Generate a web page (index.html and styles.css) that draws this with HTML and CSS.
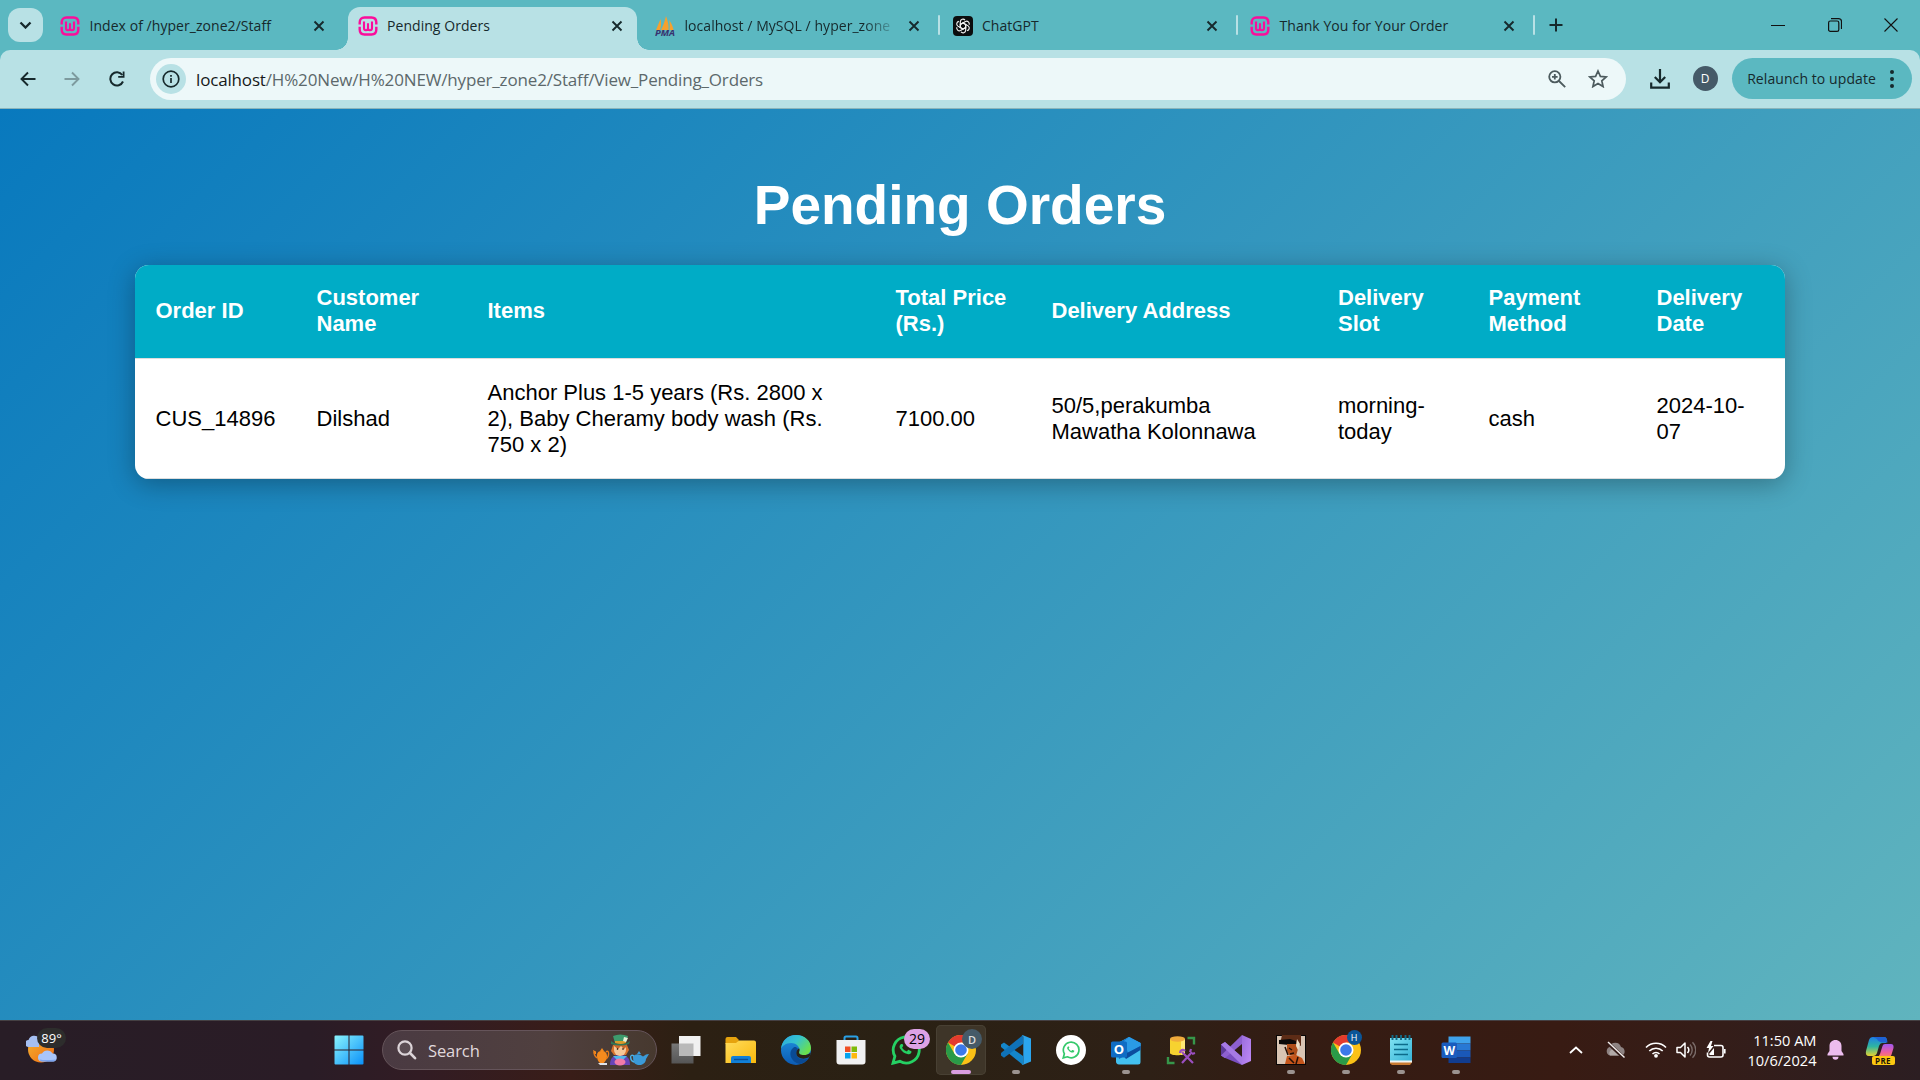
FILE: index.html
```html
<!DOCTYPE html>
<html lang="en">
<head>
<meta charset="utf-8">
<title>Pending Orders</title>
<link rel="stylesheet" href="styles.css">
</head>
<body>
<svg class="defs" aria-hidden="true">
  <defs>
    <linearGradient id="gWin" x1="0" y1="0" x2="1" y2="1"><stop offset="0" stop-color="#8af4fd"/><stop offset="1" stop-color="#0a90f8"/></linearGradient>
    <linearGradient id="gSun" x1="0" y1="0" x2="1" y2="1"><stop offset="0" stop-color="#f3b431"/><stop offset="1" stop-color="#f06a12"/></linearGradient>
    <linearGradient id="gFold" x1="0" y1="0" x2="1" y2="1"><stop offset="0" stop-color="#ffdc5c"/><stop offset="1" stop-color="#f9b90c"/></linearGradient>
    <linearGradient id="gEdgeTop" x1="0" y1="0" x2="1" y2=".6"><stop offset="0" stop-color="#2aa5e0"/><stop offset=".5" stop-color="#35c3d0"/><stop offset="1" stop-color="#6be04c"/></linearGradient>
    <linearGradient id="gEdge" x1="0" y1="0" x2="0" y2="1"><stop offset="0" stop-color="#2092de"/><stop offset="1" stop-color="#0c5bb4"/></linearGradient>
    <linearGradient id="gView" x1="0" y1="0" x2="0" y2="1"><stop offset="0" stop-color="#777"/><stop offset="1" stop-color="#555"/></linearGradient>
    <linearGradient id="gVs" x1="0" y1="0" x2="1" y2="1"><stop offset="0" stop-color="#9a6ddb"/><stop offset="1" stop-color="#c08af8"/></linearGradient>
    <linearGradient id="gPad" x1="0" y1="0" x2="1" y2="1"><stop offset="0" stop-color="#7fe2f2"/><stop offset="1" stop-color="#35b2d6"/></linearGradient>
    <linearGradient id="gCopA" x1="0" y1="0" x2="0" y2="1"><stop offset="0" stop-color="#1d7fe8"/><stop offset=".5" stop-color="#2fb5a0"/><stop offset="1" stop-color="#e6d330"/></linearGradient>
    <linearGradient id="gCopB" x1="0" y1="0" x2="0" y2="1"><stop offset="0" stop-color="#a058f0"/><stop offset=".6" stop-color="#ee5f9c"/><stop offset="1" stop-color="#fa8a50"/></linearGradient>
    <symbol id="wamp" viewBox="0 0 20 20">
      <path d="M1.700 8.600V6.500C1.700 3.200 3.500 1.500 6.500 1.500h7c3 0 4.800 1.700 4.800 5v2.100M18.300 10.800v2.700c0 3.300-1.800 5-4.800 5h-7c-3 0-4.800-1.700-4.800-5v-2.700" fill="none" stroke="#fb0d9b" stroke-width="2.400"/>
      <path d="M6 5.500v6.500c0 3 4 3 4 0V7.300M10 12c0 3 4 3 4 0V5.500" fill="none" stroke="#fb0d9b" stroke-width="2.100"/>
    </symbol>
    <symbol id="x" viewBox="0 0 12 12"><path d="M1.500 1.500l9 9M10.500 1.500l-9 9" stroke="#16292c" stroke-width="1.900"/></symbol>
    <symbol id="chrome" viewBox="0 0 30 30">
      <circle cx="15" cy="15" r="15" fill="#fbc116"/>
      <path d="M15 15L2 7.500A15 15 0 0 1 28 7.500H15z" fill="#e33b2e"/>
      <path d="M2 7.500A15 15 0 0 0 15 30L21.500 18.700 15 15 8.500 18.700z" fill="#2a9a48"/>
      <circle cx="15" cy="15" r="7.500" fill="#fff"/>
      <circle cx="15" cy="15" r="5.800" fill="#3b79ea"/>
    </symbol>
    <symbol id="phone" viewBox="0 0 24 24"><path d="M8.200 6.600c-.3-.6-.6-.6-.9-.6h-.7c-.3 0-.8.100-1.100.5C5 7 4.300 7.700 4.300 9.200s1.100 3 1.300 3.200c.2.200 2.400 3.800 6 5.100 2.900 1.100 3.500.9 4.200.8.700-.1 2.200-.9 2.500-1.800s.3-1.600.2-1.800c-.1-.1-.3-.2-.7-.4l-2.500-1.200c-.3-.1-.6-.2-.9.2l-1.100 1.400c-.2.300-.4.300-.8.100s-1.600-.6-3-1.800c-1.100-1-1.800-2.200-2-2.600-.2-.4 0-.6.200-.8l.8-1c.2-.3.200-.4.100-.7z"/></symbol>
    <symbol id="wa" viewBox="0 0 30 30"><path d="M2 28.200l1.900-6.900A13 13 0 1 1 8.900 26.300z" fill="none" stroke="currentColor" stroke-width="2.800"/><use href="#phone" x="5" y="4" width="20" height="20" fill="currentColor"/></symbol>
  </defs>
</svg>

<header class="tabstrip">
  <div class="tab-search"><svg width="13" height="8" viewBox="0 0 13 8"><path d="M1.500 1.500l5 5 5-5" fill="none" stroke="#16292c" stroke-width="2.300"/></svg></div>
  <div class="tab"><svg class="fav"><use href="#wamp"/></svg><span class="tab-title">Index of /hyper_zone2/Staff</span><svg class="tab-x"><use href="#x"/></svg></div>
  <div class="sep off"></div>
  <div class="tab active"><svg class="fav"><use href="#wamp"/></svg><span class="tab-title">Pending Orders</span><svg class="tab-x"><use href="#x"/></svg></div>
  <div class="sep off"></div>
  <div class="tab">
    <svg class="fav" viewBox="0 0 20 20"><path d="M1 14L5.500 3c1 4 .5 8-.5 11zM6 14C9 8 10 4 11 0c1.500 4 3 9 2.500 14zM14.500 14c.5-4 .3-7-.5-10 2.500 3 4 7 4.500 10z" fill="#f7a12e"/><text x="0" y="20" class="pma" textLength="20" lengthAdjust="spacingAndGlyphs">PMA</text></svg>
    <span class="tab-title fade">localhost / MySQL / hyper_zone</span><svg class="tab-x"><use href="#x"/></svg></div>
  <div class="sep"></div>
  <div class="tab">
    <svg class="fav" viewBox="0 0 20 20"><rect width="20" height="20" rx="4" fill="#0b0d0e"/><g fill="none" stroke="#f4f4f4" stroke-width="1.150"><g id="knot"><path id="k" d="M10 6.900L12.700 8.500V12.200M7.300 8.500V5.600a2.700 2.700 0 0 1 4.700-1.500"/><use href="#k" transform="rotate(60 10 10)"/><use href="#k" transform="rotate(120 10 10)"/></g><use href="#knot" transform="rotate(180 10 10)"/></g></svg>
    <span class="tab-title">ChatGPT</span><svg class="tab-x"><use href="#x"/></svg></div>
  <div class="sep"></div>
  <div class="tab"><svg class="fav"><use href="#wamp"/></svg><span class="tab-title">Thank You for Your Order</span><svg class="tab-x"><use href="#x"/></svg></div>
  <div class="sep"></div>
  <svg class="plus" width="14" height="14" viewBox="0 0 14 14"><path d="M7 .5v13M.5 7h13" stroke="#16292c" stroke-width="2"/></svg>
  <div class="win">
    <svg width="14" height="14" viewBox="0 0 14 14"><path d="M0 7.500h14" stroke="#111"/></svg>
    <svg width="14" height="14" viewBox="0 0 14 14"><rect x=".6" y="3" width="10.200" height="10.400" rx="1.700" fill="none" stroke="#111" stroke-width="1.200"/><path d="M3 .6h7.500a3 3 0 0 1 3 3V11" fill="none" stroke="#111" stroke-width="1.200"/></svg>
    <svg width="14" height="14" viewBox="0 0 14 14"><path d="M.5.5l13 13M13.500.5l-13 13" stroke="#111" stroke-width="1.100"/></svg>
  </div>
</header>

<nav class="toolbar-wrap"><div class="toolbar">
  <svg class="nav back" viewBox="0 0 16 16"><path d="M15.500 8H2M8 1.500L1.500 8 8 14.500" fill="none" stroke="#16292c" stroke-width="1.900"/></svg>
  <svg class="nav fwd" viewBox="0 0 16 16"><path d="M.5 8H14M8 1.500L14.500 8 8 14.500" fill="none" stroke="#7d9a9e" stroke-width="1.900"/></svg>
  <svg class="nav reload" viewBox="0 0 16 16"><path d="M14 10.500A6.600 6.600 0 1 1 13.300 4" fill="none" stroke="#16292c" stroke-width="2"/><path d="M15.500.5v6.300H9.200V5h4.500V.5z" fill="#16292c"/></svg>
  <div class="omni">
    <div class="info"><svg width="18" height="18" viewBox="0 0 18 18"><circle cx="9" cy="9" r="7.800" fill="none" stroke="#16292c" stroke-width="1.700"/><path d="M9 8v5M9 5v1.700" stroke="#16292c" stroke-width="1.700"/></svg></div>
    <span class="url"><b>localhost</b>/H%20New/H%20NEW/hyper_zone2/Staff/View_Pending_Orders</span>
    <svg class="mag" width="18" height="18" viewBox="0 0 18 18"><circle cx="6.800" cy="6.800" r="5.600" fill="none" stroke="#4d5b5e" stroke-width="1.800"/><path d="M11 11l6.200 6.200M6.800 4v5.600M4 6.800h5.600" stroke="#4d5b5e" stroke-width="1.800"/></svg>
    <svg class="star" width="20" height="19" viewBox="0 0 20 19"><path d="M10 2l2.400 5.400 5.800.5-4.400 3.900 1.300 5.800-5.100-3.100-5.100 3.100 1.300-5.800L1.800 7.900l5.800-.5z" fill="none" stroke="#4d5b5e" stroke-width="1.700"/></svg>
  </div>
  <svg class="dl" width="20" height="20" viewBox="0 0 20 20"><path d="M10 0v13M4.800 8l5.200 5.200L15.200 8M1.200 13.500v5.200h17.600v-5.200" fill="none" stroke="#16292c" stroke-width="2.200"/></svg>
  <div class="avatar">D</div>
  <div class="relaunch"><span>Relaunch to update</span><svg width="4" height="18" viewBox="0 0 4 18" fill="#16292c"><circle cx="2" cy="2" r="2"/><circle cx="2" cy="9" r="2"/><circle cx="2" cy="16" r="2"/></svg></div>
</div></nav>

<main class="page">
  <h1>Pending Orders</h1>
  <table class="orders">
    <colgroup><col class="c1"><col class="c2"><col class="c3"><col class="c4"><col class="c5"><col class="c6"><col class="c7"><col class="c8"></colgroup>
    <thead><tr><th>Order ID</th><th>Customer Name</th><th>Items</th><th>Total Price (Rs.)</th><th>Delivery Address</th><th>Delivery Slot</th><th>Payment Method</th><th>Delivery Date</th></tr></thead>
    <tbody><tr><td>CUS_14896</td><td>Dilshad</td><td class="items">Anchor Plus 1-5 years (Rs. 2800 x 2), Baby Cheramy body wash (Rs. 750 x 2)</td><td>7100.00</td><td>50/5,perakumba Mawatha Kolonnawa</td><td>morning-today</td><td>cash</td><td>2024-10-07</td></tr></tbody>
  </table>
</main>

<footer class="taskbar">
  <div class="weather">
    <svg width="32" height="30" viewBox="0 0 32 30"><circle cx="15" cy="14.500" r="13" fill="url(#gSun)"/><path d="M3 12a3.500 3.500 0 0 1-.5-7A6 6 0 0 1 13 3v9z" fill="#a5bff2"/><path d="M16 26.500a4 4 0 0 1 0-8 6 6 0 0 1 10.500 0 4 4 0 0 1 .5 8z" fill="#a9c5fa"/><path d="M13.500 24.500c5 1 11 .5 16.500 0-1 1.500-2 2-3 2H16c-1 0-2-.8-2.500-2z" fill="#7ca4ee"/></svg>
    <span class="temp">89°</span>
  </div>
  <div class="cell start"><svg width="30" height="30" viewBox="0 0 30 30"><path d="M1.500.5H14.500v14H.5v-13a1 1 0 0 1 1-1zM15.500.5h13a1 1 0 0 1 1 1v13h-14zM.5 15.500h14v14h-13a1 1 0 0 1-1-1zM15.500 15.500h14v13a1 1 0 0 1-1 1h-13z" fill="url(#gWin)"/></svg></div>
  <div class="search">
    <svg width="20" height="20" viewBox="0 0 20 20"><circle cx="8" cy="8" r="6.600" fill="#ffffff18" stroke="#dcd4d8" stroke-width="2.200"/><path d="M13 13l5 5.200" stroke="#dcd4d8" stroke-width="2.600" stroke-linecap="round"/></svg>
    <span>Search</span>
    <svg class="tea" width="56" height="32" viewBox="0 0 56 32">
      <path d="M3 20H1l-1-4 3 1.500zM4 22c0-4 2-5 5-5s5 2 5 5-2 7-5 8c-3-1-5-4-5-8zM7 17l2-3 2 3z" fill="#f58a1d"/><path d="M4 24Q1 22 1 18M13 18c3-3 4 4 0 7" fill="none" stroke="#ea7c18" stroke-width="1.300"/><path d="M5 29h9v2H7z" fill="#dfe3ea"/>
      <path d="M17 31c0-7 3-10 10-10s10 3 10 10z" fill="#6945b8"/><path d="M20 11l-2 6 3 4h12l3-5-2-5z" fill="#d8742c"/><path d="M21 11h12v5a6 6 0 0 1-12 0z" fill="#f6c898"/><path d="M21 12l4 3 3-3 3 3 3-3v-2H21z" fill="#c8672a"/>
      <path d="M20 2q7-3 15 0l-2 7H22z" fill="#3d9b6d"/><path d="M18 10q9 3 18 0l1-3-3 2q-7 2-13 0l-3-2z" fill="#2f7858"/><path d="M22 7h11v2q-5 2-11 0z" fill="#d99c2b"/><path d="M31 3l4 1-2 4-3-1z" fill="#e9f2da"/>
      <path d="M20 22h14l-4 4h-6z" fill="#53b9e9"/><ellipse cx="27" cy="28" rx="5.500" ry="3.500" fill="#f17ba8"/><circle cx="24.500" cy="15" r=".8"/><circle cx="30" cy="15" r=".8"/>
      <path d="M40 22c0 6 1 8 5 9h3c3-1 5-3 5-6l3-5-3 .5-3 2q-5-4-10-.5zM44 20l2-3 2 3z" fill="#3b9ad8"/><path d="M41 22c-5-3-4 5 0 6" fill="none" stroke="#4bb0e6" stroke-width="1.400"/>
    </svg>
  </div>
  <div class="apps">
    <div class="cell"><svg width="30" height="30" viewBox="0 0 30 30"><rect x=".5" y="8.500" width="22" height="20" fill="url(#gView)"/><rect x="8" y="1" width="21.500" height="20" fill="#f1f1f1"/><rect x="8" y="8.500" width="14.500" height="12.500" fill="#b9b9b9"/></svg></div>
    <div class="cell"><svg width="32" height="30" viewBox="0 0 32 30"><path d="M.5 4a2 2 0 0 1 2-2H11l3 3-2 4H.5z" fill="#e6a30e"/><path d="M.5 8H11l3-2.500h15a2 2 0 0 1 2 2V28H.5z" fill="url(#gFold)"/><path d="M6 28v-5a2 2 0 0 1 2-2h16a2 2 0 0 1 2 2v5z" fill="#1180d8"/><path d="M9 24.500h14" stroke="#0b4f97" stroke-width="1.400"/></svg></div>
    <div class="cell"><svg width="30" height="30" viewBox="0 0 30 30"><circle cx="15" cy="15" r="15" fill="url(#gEdge)"/><path d="M0 14C1 5 7 0 15 0c9 0 15 6 15 13 0 5-4 7.500-8 7.500-5 0-5-2-4-3.500C20 13 16 8 10 8 5 8 1 11 0 14z" fill="url(#gEdgeTop)"/><path d="M12 13c-5 4-3 14 7 16 3-.5 7-3 9-6-4 2-10 2-12-2-1.500-3-.5-5 1-7-2-3-4-2-5-1z" fill="#0a4a94"/><path d="M15.300 18c0-2 1.200-3.500 2.700-4.700 1.700 2.300-1 3.500.8 5.700 2.500 1.700 7.500 1.500 11-1.500-.4 2.400-1 3.800-1.800 4.800-5 2.600-12.700 1.500-12.700-4.300z" fill="#2a2215"/></svg></div>
    <div class="cell"><svg width="30" height="30" viewBox="0 0 30 30"><path d="M8.500 6V3a1.500 1.500 0 0 1 1.500-1.500h10A1.500 1.500 0 0 1 21.500 3v3" fill="none" stroke="#2aa1e6" stroke-width="2"/><path d="M.5 5h29v21.500a3 3 0 0 1-3 3h-23a3 3 0 0 1-3-3z" fill="#f1f1f2"/><path d="M9 11.500h5.500v5.500H9z" fill="#f04f24"/><path d="M15.500 11.500H21v5.500h-5.500z" fill="#7eba08"/><path d="M9 18h5.500v5.500H9z" fill="#05a3ee"/><path d="M15.500 18H21v5.500h-5.500z" fill="#fdb80b"/></svg></div>
    <div class="cell"><svg class="green" width="30" height="30"><use href="#wa"/></svg><span class="badge count">29</span></div>
    <div class="cell current"><svg width="30" height="30"><use href="#chrome"/></svg><span class="badge who d">D</span><i class="dot wide"></i></div>
    <div class="cell"><svg width="30" height="30" viewBox="0 0 30 30"><path d="M0 9.500l3-2L22 21v9L0 12z" fill="#1486ca"/><path d="M0 20.500l3 2.200L22 9V0L0 18z" fill="#0f72b8"/><path d="M21.500 0l8.500 3.500v23L21.500 30l-1-.5c1 .3 1.800-.3 1.800-1.500V2c0-1.200-.8-1.800-1.800-1.500z" fill="#2ba5ee"/></svg><i class="dot"></i></div>
    <div class="cell"><svg class="green2" width="30" height="30" viewBox="0 0 30 30"><circle cx="15" cy="15" r="15" fill="#fff"/><use href="#wa" x="6" y="6" width="18" height="18"/></svg></div>
    <div class="cell"><svg width="30" height="30" viewBox="0 0 30 30"><path d="M5 9L18 2l11.500 6v19a2.500 2.500 0 0 1-2.500 2.500H8A3 3 0 0 1 5 26z" fill="#43c0ef"/><path d="M5 9l13-7 11.500 6v4L8 24z" fill="#1171c8"/><path d="M18 2l11.500 6v3L17 18l-4-12z" fill="#2a9ae6"/><path d="M12 20l17.500-9v4L15 24z" fill="#0b4c9e"/><rect y="6.500" width="16" height="16" rx="1.500" fill="#0f6cc4"/><text x="8" y="19" class="letter" font-size="13">O</text></svg><i class="dot"></i></div>
    <div class="cell"><svg width="30" height="30" viewBox="0 0 30 30"><path d="M4 4v14c0 3 15 3 15 0V4z" fill="#f7d230"/><path d="M15 4h4v14l-4 2z" fill="#ffe873"/><ellipse cx="11.500" cy="4" rx="7.500" ry="2.700" fill="#f0ab3c"/><path d="M21.500 3H28v6.500M2 22v6h6.500" fill="none" stroke="#36964a" stroke-width="2.400"/><path d="M16 28l10-11M16 17l11 11M14 18c0-3 3-4 5-2M24 17l1-3M26 19l3-1" fill="none" stroke="#9a4fc0" stroke-width="2.200"/></svg></div>
    <div class="cell"><svg width="30" height="30" viewBox="0 0 30 30"><path d="M0 9.500L4 7l17 15v8L3 22.500l-3-2z" fill="#7a4fc0"/><path d="M0 9.500v11l5-3v-5z" fill="#5c3a98"/><path d="M0 20.500L21 0v9L4 23z" fill="#8d60cf"/><path d="M4 7L21 22v8L0 9.500z" fill="#a67ae4"/><path d="M21 0l9 4v22l-9 4z" fill="url(#gVs)"/></svg></div>
    <div class="cell"><svg width="30" height="30" viewBox="0 0 30 30"><rect x=".5" y=".5" width="29" height="29" fill="#d9c5b4" stroke="#080606"/><path d="M6 0h19v11l-4-2-6 1-6-2-5 1z" fill="#5d2c16"/><path d="M3 5l11-1 6 2v3l-7 1-10-1z" fill="#0a0909"/><path d="M11 9h9l2 5-2 7-7-1-2-4z" fill="#ad4d19"/><path d="M21 4l3 5-2 6-2-4z" fill="#eadfc8"/><path d="M9 29l2-8 9-1 6 3 3 6z" fill="#c5551b"/><path d="M13 13l3 2M14 19l4-1M13 23l5 5M22 22l-2 7M9 12l3 8" stroke="#241008" stroke-width="1.500"/></svg><i class="dot"></i></div>
    <div class="cell"><svg width="30" height="30"><use href="#chrome"/></svg><span class="badge who h">H</span><i class="dot"></i></div>
    <div class="cell"><svg width="30" height="30" viewBox="0 0 30 30"><path d="M4 3h22v24H4z" fill="url(#gPad)"/><path d="M4 26h22v1.500L24 30H6l-2-1.500z" fill="#c97a31"/><path d="M4 25.500h22v2H4z" fill="#f0f4f4"/><path d="M6.500 0v5M10.500 0v5M15 0v5M19.500 0v5M23.500 0v5" stroke="#126b88" stroke-width="1.900"/><path d="M8 9.500h14M8 14.500h14M8 19.500h14" stroke="#0c6b8a" stroke-width="1.700"/></svg><i class="dot"></i></div>
    <div class="cell"><svg width="30" height="30" viewBox="0 0 30 30"><path d="M7.500 1.500h22v7h-22z" fill="#3fa2ec"/><path d="M7.500 8.500h22v7h-22z" fill="#2878d4"/><path d="M7.500 15.500h22v7h-22z" fill="#1a58b8"/><path d="M7.500 22.500h22V28h-22z" fill="#113c8f"/><rect x=".5" y="7.500" width="15.500" height="15.500" rx="1.500" fill="#1a5cbe"/><text x="8.200" y="19.500" class="letter" font-size="12">W</text></svg><i class="dot"></i></div>
  </div>
  <div class="tray">
    <svg width="14" height="8" viewBox="0 0 14 8"><path d="M1 7l6-5.500L13 7" fill="none" stroke="#fff" stroke-width="1.800"/></svg>
    <svg class="cloud" width="22" height="18" viewBox="0 0 22 18"><path d="M5 14.500a4.500 4.500 0 0 1-.5-8.500A6 6 0 0 1 16 6a4.500 4.500 0 0 1 1 8.500z" fill="#8d8281"/><path d="M5 14.500a4 4 0 0 1 2-6q4-2 7 2l4 4z" fill="#b3aaa8"/><path d="M2.500 1.500l17 16" stroke="#351c18" stroke-width="3.500"/><path d="M3 1l16.500 15.500" stroke="#f4f0ef" stroke-width="1.400"/></svg>
    <svg class="wifi" width="22" height="16" viewBox="0 0 22 16"><path d="M1 5.500a14 14 0 0 1 20 0M4.300 9a9.500 9.500 0 0 1 13.400 0M7.500 12a5 5 0 0 1 7 0" fill="none" stroke="#fff" stroke-width="1.600"/><circle cx="11" cy="13.800" r="1.900" fill="#fff"/></svg>
    <svg class="vol" width="20" height="18" viewBox="0 0 20 18"><path d="M1 6.500h3.500L9 2v14l-4.500-4.500H1z" fill="none" stroke="#fff" stroke-width="1.500" stroke-linejoin="round"/><path d="M11.500 6a4.500 4.500 0 0 1 0 6" fill="none" stroke="#fff" stroke-width="1.500"/><path d="M14 3.500a8 8 0 0 1 0 11M16.500 1.200a11 11 0 0 1 0 15.600" fill="none" stroke="#7a6c69" stroke-width="1.400"/></svg>
    <svg class="bat" width="20" height="18" viewBox="0 0 20 18"><path d="M8 4.500h7a2 2 0 0 1 2 2V14a2 2 0 0 1-2 2H3.500a2 2 0 0 1-2-2v-2.500M18.800 8v4.500" fill="none" stroke="#fff" stroke-width="1.600"/><path d="M4.500 0L.5 7H3L2 12l5.500-7H5L6.500 0z" fill="#fff"/><path d="M8 7v7H3.500v-1.500z" fill="#fff"/></svg>
    <div class="clock"><span>11:50 AM</span><span>10/6/2024</span></div>
    <svg class="bell" width="17" height="20" viewBox="0 0 17 20"><path d="M8.500 0C5 0 2.500 2.500 2.500 6v5L.5 14v1.500h16V14l-2-3V6c0-3.500-2.500-6-6-6zM5.500 16.800a3 3 0 0 0 6 0z" fill="#ecbcee"/></svg>
    <div class="copilot"><svg width="30" height="26" viewBox="0 0 30 26"><path d="M8 1h11q3 0 3 4l-1 2h-4q-2 0-3 3l-2 7q-1 3-4 3H4q-4 0-3-5L4 4q1-3 4-3z" fill="url(#gCopA)"/><path d="M8 1h11q3 0 3.500 5.500H17q-4-1-5-3.500z" fill="#1e62d4"/><path d="M20 8h6q3 0 2.500 4L27 17q-1 5-5 5H11q3-1 4-4l2.500-8Q18 8 20 8z" fill="url(#gCopB)"/></svg><span>PRE</span></div>
  </div>
</footer>
</body>
</html>
```
FILE: styles.css
```css
* { box-sizing: border-box; }
body {
  margin: 0;
  width: 1920px;
  height: 1080px;
  overflow: hidden;
  display: flex;
  flex-direction: column;
  font-family: "Open Sans", "Noto Sans", sans-serif;
}
svg { display: block; flex: none; }
.defs { position: absolute; width: 0; height: 0; }

/* Tab strip */
.tabstrip {
  height: 50px;
  flex: none;
  display: flex;
  align-items: center;
  padding: 0 22px 0 8px;
  background: #5bb8c1;
  color: #16292c;
}
.tab-search {
  width: 35px;
  height: 34px;
  margin-right: 7px;
  border-radius: 12px;
  background: #b8e1e5;
  display: grid;
  place-items: center;
}
.tab {
  position: relative;
  width: 289px;
  height: 43px;
  align-self: flex-end;
  flex: none;
  display: flex;
  align-items: center;
  padding: 0 14px 0 10px;
}
.tab.active { background: #b8e1e5; border-radius: 12px 12px 0 0; }
.tab.active::before, .tab.active::after {
  content: "";
  position: absolute;
  bottom: 0;
  width: 12px;
  height: 12px;
}
.tab.active::before { left: -12px; background: radial-gradient(circle at 0 0, transparent 11.5px, #b8e1e5 12px); }
.tab.active::after { right: -12px; background: radial-gradient(circle at 100% 0, transparent 11.5px, #b8e1e5 12px); }
.fav { width: 20px; height: 20px; margin: -6px 9.500px 0 0; }
.tab-title { flex: 1; font-size: 14px; line-height: 20px; letter-spacing: .05px; white-space: nowrap; margin-top: -6px; }
.tab-x { width: 12px; height: 12px; margin: -5px 0 0 12px; }
.fade { -webkit-mask-image: linear-gradient(90deg, #000 178px, transparent 214px); mask-image: linear-gradient(90deg, #000 178px, transparent 214px); }
.pma { font: italic bold 8px "Open Sans", sans-serif; fill: #37326e; }
.sep { width: 2px; height: 20px; margin: 0 2.500px 0 4px; background: #b8e1e5; border-radius: 1px; flex: none; }
.sep.off { background: transparent; }
.plus { margin-left: 11px; }
.win { margin-left: auto; display: flex; gap: 42.500px; }

/* Toolbar */
.toolbar-wrap { background: #5bb8c1; flex: none; }
.toolbar {
  height: 59px;
  display: flex;
  align-items: center;
  padding: 0 8px 1px 20px;
  background: #b8e1e5;
  border-bottom: 1px solid #8bb5bb;
  border-radius: 10px 10px 0 0;
  color: #16292c;
}
.nav { width: 16px; height: 16px; }
.fwd { margin-left: 28px; }
.reload { margin-left: 29px; }
.omni {
  margin-left: 25px;
  width: 1477px;
  height: 42px;
  border-radius: 21px;
  background: #edf8f9;
  display: flex;
  align-items: center;
  padding-left: 6px;
}
.info { width: 30px; height: 30px; border-radius: 50%; background: #b8e1e5; display: grid; place-items: center; }
.url { margin: 2px 0 0 10px; width: 1352px; font-size: 17px; letter-spacing: -.16px; color: #5c686b; white-space: nowrap; }
.url b { font-weight: 400; color: #16191a; }
.star { margin-left: 22px; }
.dl { margin-left: 24px; }
.avatar {
  width: 25px;
  height: 25px;
  margin-left: 23px;
  border-radius: 50%;
  background: #455a68;
  color: #fff;
  font-size: 12px;
  display: grid;
  place-items: center;
}
.relaunch {
  width: 180px;
  height: 41px;
  margin-left: 14.500px;
  border-radius: 21px;
  background: #5bb8c1;
  display: flex;
  align-items: center;
  justify-content: space-between;
  padding: 0 18px 0 15px;
  font-size: 14px;
  letter-spacing: .08px;
  white-space: nowrap;
}

/* Page */
.page {
  height: 911px;
  flex: none;
  display: flex;
  flex-direction: column;
  align-items: center;
  background: linear-gradient(135deg, #0879be, #60b4be);
  font-family: "Liberation Sans", Arial, sans-serif;
}
h1 { margin: 65px 0 28px; font-size: 55px; line-height: 63px; color: #fff; }
.orders {
  width: 1650px;
  table-layout: fixed;
  border-collapse: collapse;
  border-radius: 14px;
  overflow: hidden;
  background: #fff;
  box-shadow: 0 5px 27px rgba(0, 0, 0, .3);
  font-size: 22px;
  line-height: 26px;
  text-align: left;
}
.orders th, .orders td { padding: 20.500px; border-bottom: 1px solid #ddd; color: #000; }
.orders th { padding-top: 19.500px; padding-bottom: 21.500px; background: #00acc6; color: #fff; }
.orders .items { padding-right: 42px; }
.c1 { width: 161px; }
.c2 { width: 171px; }
.c3 { width: 408px; }
.c4 { width: 156px; }
.c5 { width: 286.500px; }
.c6 { width: 150.500px; }
.c7 { width: 168px; }
.c8 { width: 149px; }

/* Taskbar */
.taskbar {
  height: 60px;
  flex: none;
  display: flex;
  align-items: center;
  padding-bottom: 1px;
  border-top: 1px solid #454043;
  background: linear-gradient(90deg, #281d26 0, #2a1c26 310px, #321c24 420px, #391d18 570px, #2c2013 690px, #2a2114 900px, #2e2016 1150px, #341c13 1300px, #381b13 1560px, #351d18 1700px, #2c1e22 1920px);
  color: #fff;
}
.weather { position: relative; width: 324px; padding-left: 25.500px; }
.temp {
  position: absolute;
  left: 37px;
  top: -7px;
  width: 29px;
  height: 20px;
  border-radius: 10px;
  background: #2d2d2c;
  font-size: 13px;
  line-height: 20px;
  text-align: center;
}
.cell { position: relative; width: 50px; height: 50px; flex: none; display: grid; place-items: center; border-radius: 5px; }
.current { background: #3e3528; box-shadow: inset 0 0 0 1px #484033; }
.search {
  width: 275px;
  height: 40px;
  margin-left: 8px;
  border-radius: 20px;
  border: 1px solid #65545a;
  background: linear-gradient(90deg, #4a3a42, #50403f 60%, #47392f);
  display: flex;
  align-items: center;
  padding: 0 7px 0 14px;
  font-size: 16.500px;
  letter-spacing: -.1px;
  color: #e0d9dc;
}
.search span { margin-left: 11px; }
.tea { margin-left: auto; }
.apps { display: flex; gap: 5px; margin-left: 4px; }
.green { color: #25d063; }
.green2 { color: #35c96b; }
.badge { position: absolute; display: grid; place-items: center; line-height: 1; }
.count { left: 23px; top: 4px; width: 26px; height: 20px; border-radius: 10px; background: #dda2e6; color: #000; font-size: 14px; }
.who { left: 26px; top: 4px; width: 20px; height: 20px; border-radius: 50%; font-size: 11px; }
.d { background: #455a68; color: #ddd; font-weight: 600; }
.h { left: 25.500px; width: 15px; height: 15px; top: 5px; background: #0b5597; font-size: 9px; }
.dot { position: absolute; left: 21px; bottom: 1px; width: 8px; height: 4px; border-radius: 2px; background: #9b9390; }
.dot.wide { left: 15px; width: 20px; background: #d99de0; }
.letter { font-family: "Open Sans", sans-serif; font-weight: 700; fill: #fff; text-anchor: middle; }
.tray { margin-left: 87.500px; display: flex; align-items: center; }
.cloud { margin-left: 22px; }
.wifi { margin-left: 18px; }
.vol { margin-left: 9px; }
.bat { margin-left: 10px; }
.clock { width: 91px; display: flex; flex-direction: column; align-items: flex-end; font-size: 14.600px; line-height: 20px; }
.bell { margin-left: 10px; }
.copilot { margin-left: 21px; display: flex; flex-direction: column; align-items: flex-end; }
.copilot span { margin-top: -6px; width: 23px; height: 9px; border-radius: 2px; background: #fcc811; color: #1b1508; font-size: 8px; font-weight: 700; line-height: 9px; letter-spacing: .4px; text-align: center; }
```
